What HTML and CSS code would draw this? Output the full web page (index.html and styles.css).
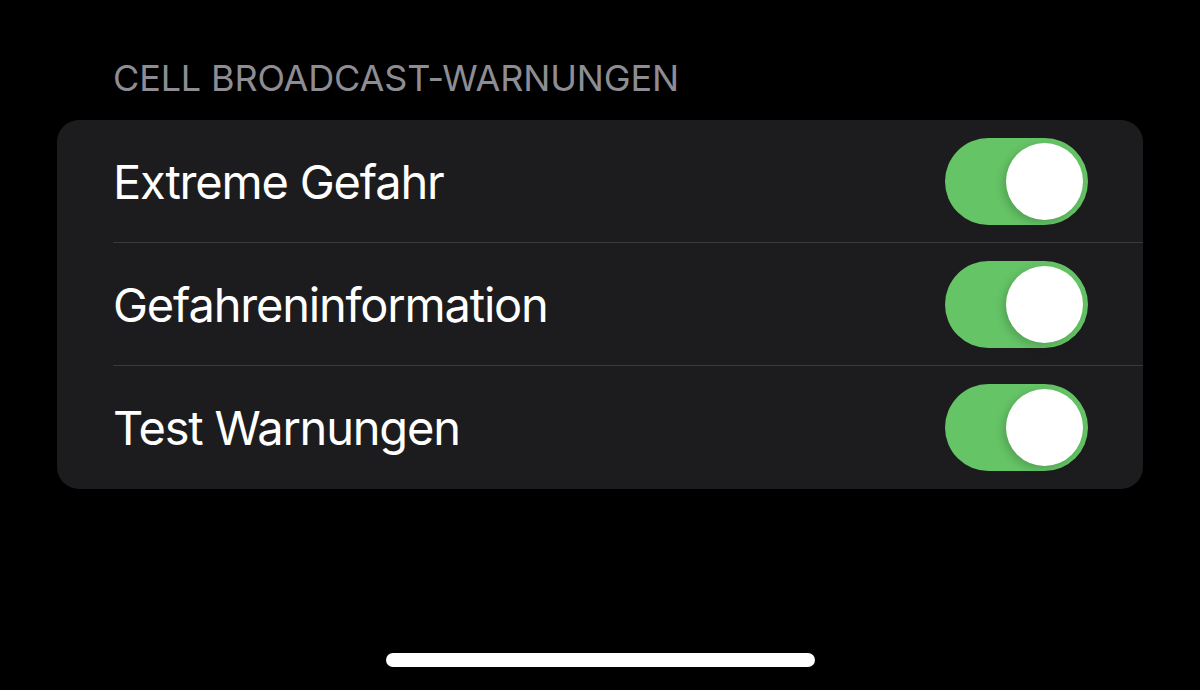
FILE: index.html
```html
<!DOCTYPE html>
<html lang="de">
<head>
  <meta charset="UTF-8">
  <meta name="viewport" content="width=device-width, initial-scale=1.0">
  <title>Cell Broadcast-Warnungen</title>
  <link rel="stylesheet" href="styles.css">
</head>
<body>
  <div class="screen">
    <h2 class="section-title">CELL BROADCAST-WARNUNGEN</h2>

    <div class="card">
      <div class="row">
        <span class="label">Extreme Gefahr</span>
        <span class="switch on"><span class="knob"></span></span>
      </div>
      <div class="row">
        <span class="label">Gefahreninformation</span>
        <span class="switch on"><span class="knob"></span></span>
      </div>
      <div class="row">
        <span class="label">Test Warnungen</span>
        <span class="switch on"><span class="knob"></span></span>
      </div>
    </div>

    <div class="home-bar"></div>
  </div>
</body>
</html>
```

FILE: styles.css
```css
body {
  margin: 0;
  background: #000;
  font-family: Inter, "Noto Sans", sans-serif;
  color: #fff;
}

.screen {
  height: 690px;
  padding: 0 57px;
  box-sizing: border-box;
  display: flex;
  flex-direction: column;
}

.section-title {
  margin: 56px 0 0 56px;
  font-size: 36px;
  font-weight: 400;
  line-height: 44px;
  color: #8d8d93;
  letter-spacing: -0.15px;
}

.card {
  margin-top: 20px;
  background: #1c1c1e;
  border-radius: 22px;
  padding-left: 56px;
}

.row {
  height: 123px;
  display: flex;
  align-items: center;
  justify-content: space-between;
  padding-right: 55px;
  border-bottom: 1px solid #3a3a3c;
  box-sizing: border-box;
}

.row:last-child {
  border-bottom: none;
}

.label {
  font-size: 47px;
  letter-spacing: -1.2px;
}

.switch {
  width: 143px;
  height: 87px;
  border-radius: 44px;
  background: #39393d;
  display: flex;
  align-items: center;
  padding: 0 5px;
  box-sizing: border-box;
}

.switch.on {
  background: #65c466;
  justify-content: flex-end;
}

.knob {
  width: 77px;
  height: 77px;
  border-radius: 50%;
  background: #fff;
  box-shadow: -3px 3px 8px rgba(0, 0, 0, 0.18);
}

.home-bar {
  margin: auto auto 23px;
  width: 429px;
  height: 14px;
  border-radius: 7px;
  background: #fff;
}
```
